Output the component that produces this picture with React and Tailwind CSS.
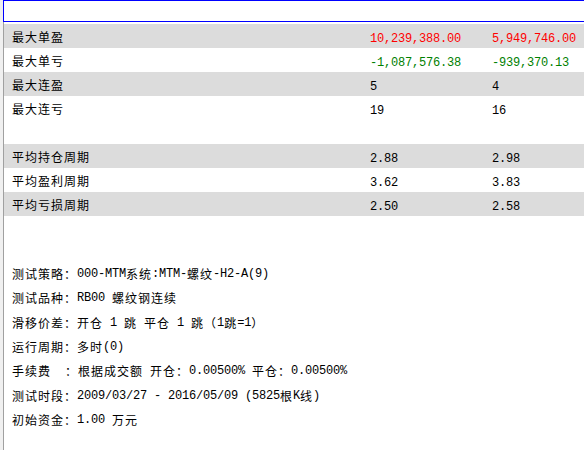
import React from "react";

function T({ text }) {
  const parts = text.split(/([\x00-\x7f]+)/).filter((p) => p.length > 0);
  return (
    <>
      {parts.map((p, i) =>
        /^[\x00-\x7f]+$/.test(p) ? (
          <span key={i} className="font-['Liberation_Mono',monospace] text-[12px] tracking-[-0.2px] whitespace-pre">
            {p}
          </span>
        ) : (
          <span key={i} className="font-['Noto_Sans_CJK_SC',sans-serif] text-[12px] tracking-[1px] whitespace-pre">
            {p}
          </span>
        )
      )}
    </>
  );
}

const rows = [
  { label: "最大单盈", a: "10,239,388.00", b: "5,949,746.00", color: "text-[#ff0000]", gray: true },
  { label: "最大单亏", a: "-1,087,576.38", b: "-939,370.13", color: "text-[#008000]", gray: false },
  { label: "最大连盈", a: "5", b: "4", color: "text-black", gray: true },
  { label: "最大连亏", a: "19", b: "16", color: "text-black", gray: false },
  null,
  { label: "平均持仓周期", a: "2.88", b: "2.98", color: "text-black", gray: true },
  { label: "平均盈利周期", a: "3.62", b: "3.83", color: "text-black", gray: false },
  { label: "平均亏损周期", a: "2.50", b: "2.58", color: "text-black", gray: true },
];

const info = [
  "测试策略：000-MTM系统:MTM-螺纹-H2-A(9)",
  "测试品种：RB00 螺纹钢连续",
  "滑移价差：开仓 1 跳 平仓 1 跳（1跳=1）",
  "运行周期：多时(0)",
  "手续费  ：根据成交额 开仓：0.00500% 平仓：0.00500%",
  "测试时段：2009/03/27 - 2016/05/09 (5825根K线)",
  "初始资金：1.00 万元",
];

export default function App() {
  return (
    <div className="w-[584px] h-[450px] overflow-hidden bg-[#f0f0f0] pl-[3px] flex">
      <div className="flex-1 h-full bg-white border-l border-[#a0a0a0] flex flex-col text-black">
        <div className="h-[22px] -ml-px border-t border-b border-l border-[#0000ff] bg-white shrink-0" />
        <div className="h-[2px] shrink-0" />
        {rows.map((r, i) =>
          r === null ? (
            <div key={i} className="h-[24px] shrink-0" />
          ) : (
            <div
              key={i}
              className={`h-[24px] shrink-0 grid grid-cols-[366px_122px_1fr] items-center ${r.gray ? "bg-[#dcdcdc]" : "bg-white"}`}
            >
              <div className="pl-[8px] leading-none">
                <T text={r.label} />
              </div>
              <div className={`leading-none ${r.color}`}>
                <T text={r.a} />
              </div>
              <div className={`leading-none ${r.color}`}>
                <T text={r.b} />
              </div>
            </div>
          )
        )}
        <div className="mt-[46px] pl-[8px] flex flex-col">
          {info.map((l, i) => (
            <div key={i} className="h-[24.33px] flex items-center whitespace-pre leading-none">
              <T text={l} />
            </div>
          ))}
        </div>
      </div>
    </div>
  );
}
